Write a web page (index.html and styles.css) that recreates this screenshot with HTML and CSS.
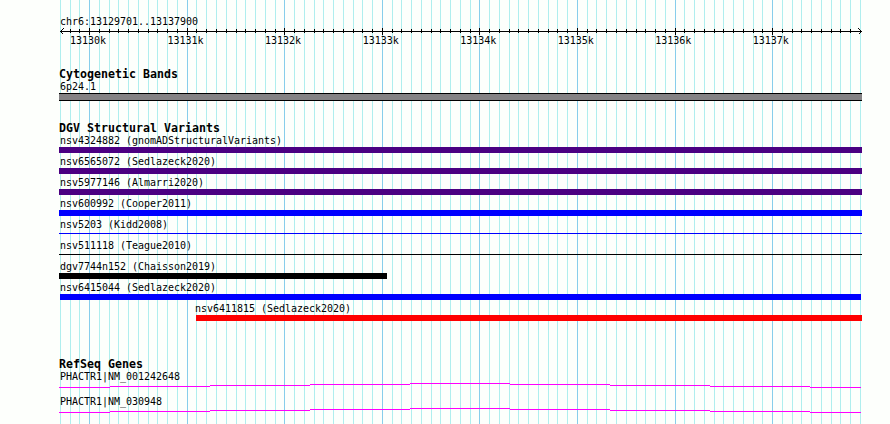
FILE: index.html
```
<!DOCTYPE html>
<html lang="en">
<head>
    <meta charset="UTF-8">
    <title>chr6:13129701..13137900</title>
    <link rel="stylesheet" href="styles.css">
</head>
<body>
    <div class="browser">
        <svg class="grid" id="grid" width="890" height="424"></svg>

        <div class="ruler">
            <div class="label">chr6:13129701..13137900</div>
            <svg class="axis" id="axis" width="804" height="9">
                <path class="arrow" d="M1.5 4.5h801M4.5 1.5l-3 3 3 3M799.5 1.5l3 3-3 3"/>
            </svg>
            <div class="ticks">
                <span>13130k</span>
                <span>13131k</span>
                <span>13132k</span>
                <span>13133k</span>
                <span>13134k</span>
                <span>13135k</span>
                <span>13136k</span>
                <span>13137k</span>
            </div>
        </div>

        <div class="track cyto">
            <h2>Cytogenetic Bands</h2>
            <div class="label">6p24.1</div>
            <div class="band"></div>
        </div>

        <div class="track variants">
            <h2>DGV Structural Variants</h2>
            <div class="row"><div class="label">nsv4324882 (gnomADStructuralVariants)</div><div class="bar indigo"></div></div>
            <div class="row"><div class="label">nsv6565072 (Sedlazeck2020)</div><div class="bar indigo"></div></div>
            <div class="row"><div class="label">nsv5977146 (Almarri2020)</div><div class="bar indigo"></div></div>
            <div class="row"><div class="label">nsv600992 (Cooper2011)</div><div class="bar blue"></div></div>
            <div class="row"><div class="label">nsv5203 (Kidd2008)</div><div class="bar thin blue"></div></div>
            <div class="row"><div class="label">nsv511118 (Teague2010)</div><div class="bar thin black"></div></div>
            <div class="row"><div class="label">dgv7744n152 (Chaisson2019)</div><div class="bar black short"></div></div>
            <div class="row"><div class="label">nsv6415044 (Sedlazeck2020)</div><div class="bar blue inset"></div></div>
            <div class="row late"><div class="label">nsv6411815 (Sedlazeck2020)</div><div class="bar red"></div></div>
        </div>

        <div class="track genes">
            <h2>RefSeq Genes</h2>
            <div class="gene">
                <div class="label">PHACTR1|NM_001242648</div>
                <svg class="intron" width="803" height="5">
                    <path d="M0 4.5h51M51 3.5h100M151 2.5h100M251 1.5h100M351 .5h100M451 1.5h100M551 2.5h100M651 3.5h100M751 4.5h51"/>
                </svg>
            </div>
            <div class="gene">
                <div class="label">PHACTR1|NM_030948</div>
                <svg class="intron" width="803" height="5">
                    <path d="M0 4.5h51M51 3.5h100M151 2.5h100M251 1.5h100M351 .5h100M451 1.5h100M551 2.5h100M651 3.5h100M751 4.5h51"/>
                </svg>
            </div>
        </div>
    </div>
    <script>
        const grid = document.getElementById('grid');
        const axis = document.getElementById('axis');

        function addLine(svg, x, y1, y2, cls) {
            const line = document.createElementNS('http://www.w3.org/2000/svg', 'path');
            line.setAttribute('d', 'M' + (x + 0.5) + ' ' + y1 + 'V' + y2);
            line.setAttribute('class', cls);
            svg.appendChild(line);
        }

        // one line per 100 bp, a darker one per 1000 bp
        for (let i = 0; i <= 82; i++) {
            const x = Math.floor(60.4 + i * 800 / 82);
            const major = i % 10 === 3;
            addLine(grid, x, 0, 424, major ? 'major' : 'minor');

            if (i > 0 && i < 82) {
                addLine(axis, x - 59, major ? 1 : 2, major ? 8 : 6, 'tick');
            }
        }
    </script>
</body>
</html>
```
FILE: styles.css
```
body {
    margin: 0;
    background-color: #fdfffc;
    color: #000;
    font-family: "DejaVu Sans Mono", monospace;
}

.browser {
    display: grid;
    grid-template-columns: 59px 803px;
    align-content: start;
    width: 890px;
    height: 424px;
    overflow: hidden;
    position: relative;
}

/* the grid lies behind every track */
.grid {
    position: absolute;
    top: 0;
    left: 0;
    z-index: -1;
}

svg {
    display: block;
}

svg path {
    fill: none;
    stroke-width: 1;
    shape-rendering: crispEdges;
}

.minor { stroke: #afeeee; }
.major { stroke: #87ceeb; }
.tick, .arrow { stroke: #000; }
.intron path { stroke: #f0f; }

.ruler, .track {
    grid-column: 2;
}

.label, .ticks {
    font-size: 10px;
    letter-spacing: -0.02px;
    line-height: 12px;
    height: 12px;
    white-space: pre;
}

.label {
    padding-left: 1px;
    line-height: 14px;
}

h2 {
    margin: 0;
    height: 13px;
    font-size: 11.6px;
    line-height: 15px;
    letter-spacing: 0.017px;
    font-weight: bold;
}

.ruler {
    height: 67px;
    padding-top: 15px;
    box-sizing: border-box;
}

.ticks {
    display: grid;
    grid-template-columns: repeat(8, 97.56px);
    padding-left: 11px;
    margin-top: -1px;
}

.cyto {
    height: 54px;
}

.band {
    height: 8px;
    box-sizing: border-box;
    margin-top: 1px;
    background-color: #848284;
    border-top: 1px solid #000;
    border-bottom: 1px solid #000;
}

.variants {
    height: 236px;
}

.row {
    height: 21px;
}

.bar {
    height: 6px;
    margin-top: 1px;
}

.thin {
    height: 1px;
    margin-top: 3px;
}

.indigo { background-color: #4b0082; }
.blue { background-color: #00f; }
.black { background-color: #000; }
.red { background-color: #f00; }

.short {
    width: 328px;
}

.inset {
    margin-left: 1px;
    margin-right: 1px;
}

.late {
    padding-left: 137px;
}

.late .label {
    padding-left: 0;
    margin-left: -1px;
}

.gene {
    height: 25px;
}

.intron {
    margin-top: 1px;
}
```
